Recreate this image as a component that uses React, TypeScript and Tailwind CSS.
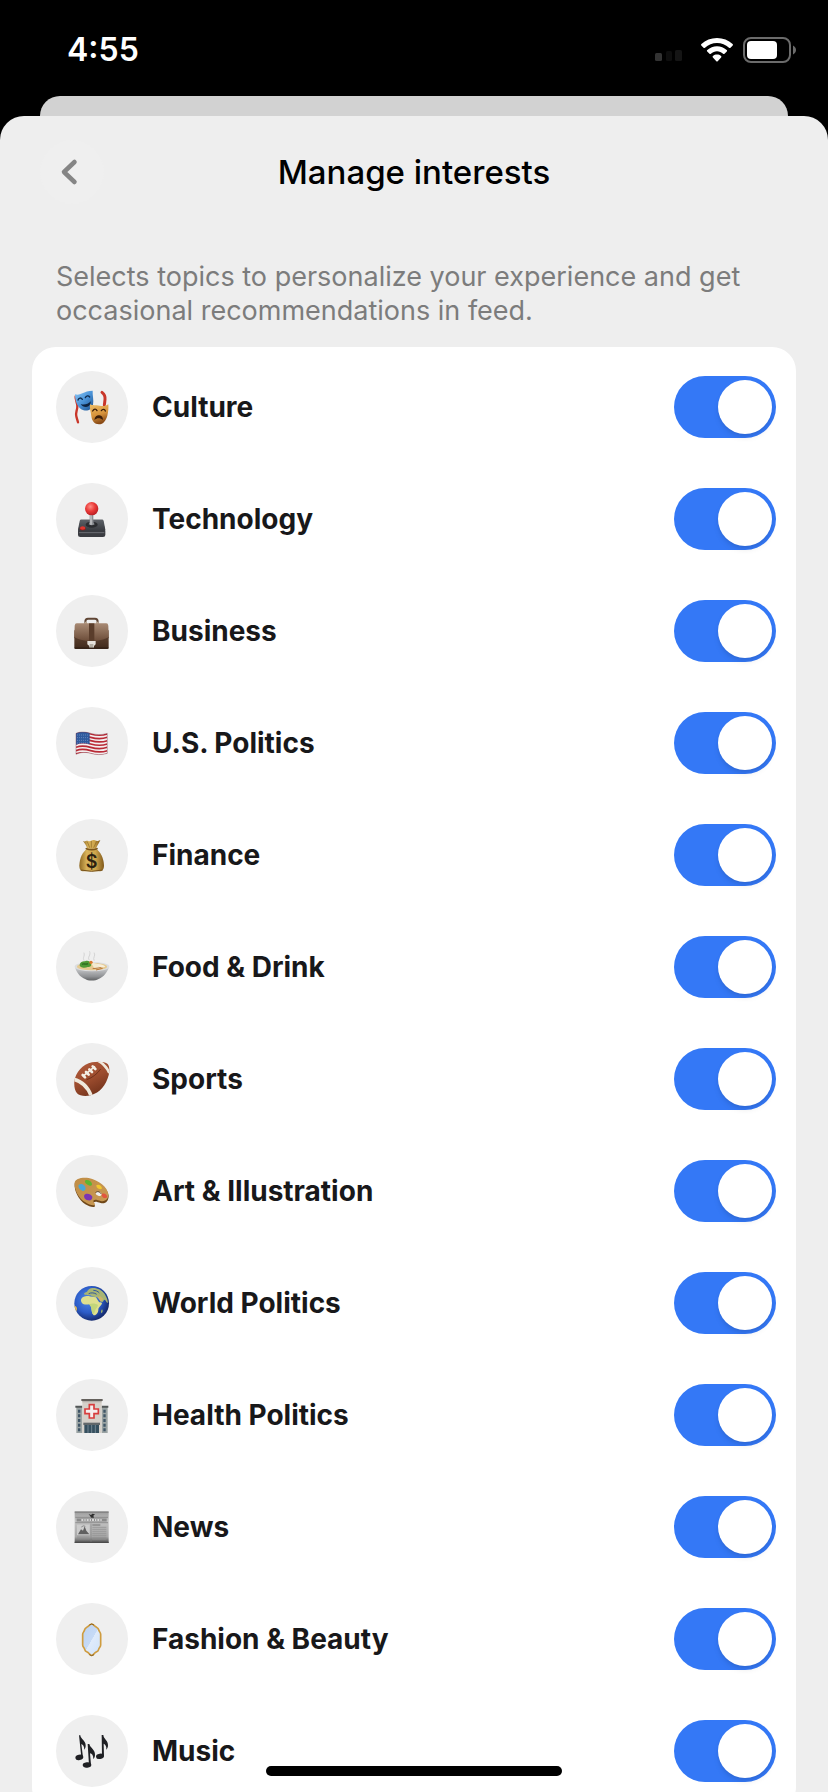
import { useState } from 'react';
import type { ReactNode } from 'react';

/* Topic drawings, all on a 108 x 108 grid */

function MasksIcon() {
  return (
    <>
      <defs>
        <linearGradient id="mask-blue" x1="0" y1="0" x2="1" y2="1">
          <stop offset="0" stopColor="#8cc8f5" />
          <stop offset="0.5" stopColor="#4a93d8" />
          <stop offset="1" stopColor="#1d4f8c" />
        </linearGradient>
        <linearGradient id="mask-gold" x1="0" y1="0" x2="0.3" y2="1">
          <stop offset="0" stopColor="#f0bf68" />
          <stop offset="0.6" stopColor="#d6923a" />
          <stop offset="1" stopColor="#8a4b17" />
        </linearGradient>
      </defs>
      <path d="M5 22c-2 10 6 20 5 32s-6 18-3 28c1 5 3 10 5 18" fill="none" stroke="#c9362a" strokeWidth="7" strokeLinecap="round" />
      <path d="M84 10c8 6 10 14 9 22s-1 12-2 16" fill="none" stroke="#c9362a" strokeWidth="9" strokeLinecap="round" />
      <path d="M3 16c8 3 14 1 22-3s18-8 31-8c-1 14 4 28 1 42-3 13-14 20-28 17C12 60 3 38 3 16z" fill="url(#mask-blue)" />
      <path d="M12 33c2-7 9-8 13-2M34 26c3-6 9-7 13-2" fill="none" stroke="#102b4d" strokeWidth="4" strokeLinecap="round" />
      <path d="M20 45c10 4 22 1 30-8 0 10-5 17-14 17-7 0-13-3-16-9z" fill="#0e2340" />
      <path d="M48 46c6 4 14 2 20 3 12 1 22 6 35-3 1 10 0 22-3 34-4 14-12 26-25 26-14 0-21-10-23-24-1-12-6-24-4-36z" fill="url(#mask-gold)" />
      <path d="M56 66c4-7 10-7 13-1M82 65c4-6 10-5 12 1" fill="none" stroke="#3b1d08" strokeWidth="4" strokeLinecap="round" />
      <path d="M61 93c2-12 9-15 15-14 8 1 11 7 11 14-8-6-17-7-26 0z" fill="#3b1d08" />
    </>
  );
}

function JoystickIcon() {
  return (
    <>
      <defs>
        <radialGradient id="joy-ball" cx="0.4" cy="0.35" r="0.7">
          <stop offset="0" stopColor="#ff8d85" />
          <stop offset="0.5" stopColor="#ea3a38" />
          <stop offset="1" stopColor="#b51c22" />
        </radialGradient>
        <linearGradient id="joy-base" x1="0" y1="0" x2="0" y2="1">
          <stop offset="0" stopColor="#5d6167" />
          <stop offset="1" stopColor="#36393e" />
        </linearGradient>
      </defs>
      <path d="M20 56h66l8 34v12q0 6-7 6H19q-7 0-7-6V90z" fill="#3a3c41" />
      <path d="M20 56h66q2 0 3 4l5 26q0 5-6 5H18q-6 0-6-5l5-26q1-4 3-4z" fill="url(#joy-base)" />
      <path d="M15 95h76" stroke="#6b6e73" strokeWidth="3" />
      <ellipse cx="53" cy="71" rx="18" ry="9" fill="#2a2c30" />
      <path d="M44 70q3-4 3-10V40h11v20q0 6 4 10-9 6-18 0z" fill="#8b8e93" />
      <path d="M49 40h4v31h-4z" fill="#c9cbce" />
      <circle cx="53" cy="23" r="20" fill="url(#joy-ball)" />
      <ellipse cx="26" cy="83" rx="9" ry="5" fill="#8e1a1a" />
      <ellipse cx="26" cy="81" rx="8" ry="5" fill="#e0372f" />
    </>
  );
}

function BriefcaseIcon() {
  return (
    <>
      <defs>
        <linearGradient id="case-flap" x1="0" y1="0" x2="0" y2="1">
          <stop offset="0" stopColor="#a88a74" />
          <stop offset="1" stopColor="#6b4c38" />
        </linearGradient>
        <linearGradient id="case-body" x1="0" y1="0" x2="0" y2="1">
          <stop offset="0" stopColor="#6c4d39" />
          <stop offset="1" stopColor="#3f291c" />
        </linearGradient>
      </defs>
      <path d="M34 32v-6q0-9 8-9h21q8 0 8 9v6" fill="none" stroke="#5f4534" strokeWidth="6" />
      <path d="M32 26h7v7h-7zM67 26h7v7h-7z" fill="#b9a690" />
      <rect x="1" y="50" width="103" height="58" rx="4" fill="url(#case-body)" />
      <path d="M8 31h89q5 0 6 7l1 36c-20 10-34 11-51 11S20 84 1 74l1-36q1-7 6-7z" fill="url(#case-flap)" />
      <path d="M1 74c19 10 35 11 52 11s31-1 51-11" fill="none" stroke="#4a3224" strokeWidth="2" />
      <path d="M45 31h16v53H45z" fill="#5a3d2b" />
      <path d="M40 84h25v10l-5 5v6H46v-6l-6-5z" fill="#e6e2dc" />
      <path d="M47 93h11v10H47z" fill="#b2aca2" />
      <path d="M2 105h101" stroke="#2d1c12" strokeWidth="3" />
    </>
  );
}

function FlagIcon() {
  const stripes = [0, 1, 2, 3, 4, 5, 6];
  return (
    <>
      <defs>
        <clipPath id="flag-shape">
          <path d="M6 25c14-6 30-4 44 0s32 6 50 0v60c-18 6-36 4-50 0s-30-4-44 3z" />
        </clipPath>
      </defs>
      <g clipPath="url(#flag-shape)">
        <path d="M0 10h108v90H0z" fill="#f4f0f0" />
        {stripes.map((i) => (
          <path
            key={i}
            d={`M6 ${27 + i * 10}c14-6 30-4 44 0s32 6 50 0`}
            fill="none"
            stroke="#b92a36"
            strokeWidth="5"
          />
        ))}
        <path d="M6 20h41v38c-14-4-28-4-41 1z" fill="#2f5a9e" />
        <path d="M10 30h36M10 38h36M10 46h36M10 54h34" stroke="#a9c0e2" strokeWidth="2" strokeDasharray="2 4" />
      </g>
      <path d="M6 25c14-6 30-4 44 0s32 6 50 0v60c-18 6-36 4-50 0s-30-4-44 3z" fill="none" stroke="#7d3a46" strokeOpacity="0.6" strokeWidth="2" />
    </>
  );
}

function MoneyBagIcon() {
  return (
    <>
      <defs>
        <linearGradient id="bag-gold" x1="0" y1="0" x2="1" y2="0">
          <stop offset="0" stopColor="#8f6a24" />
          <stop offset="0.3" stopColor="#d8b35a" />
          <stop offset="0.65" stopColor="#cfa64c" />
          <stop offset="1" stopColor="#80591a" />
        </linearGradient>
      </defs>
      <path d="M27 12c7 4 9-3 16 0s12-5 19-2 9 3 17-1c-4 9-9 16-13 26H40c-3-9-8-16-13-23z" fill="url(#bag-gold)" />
      <path d="M40 35h26c14 10 23 28 24 50 0 12-5 18-14 18H29c-9 0-13-6-13-18 1-22 9-40 24-50z" fill="url(#bag-gold)" />
      <path d="M40 14l7 18M52 12v20M68 13l-9 19" stroke="#8a6522" strokeWidth="2" />
      <path d="M37 35q16 6 32 0" fill="none" stroke="#7c5518" strokeWidth="5" strokeLinecap="round" />
      <path d="M20 99q33 8 66 0" fill="none" stroke="#76511a" strokeWidth="3" />
      <text x="53" y="92" textAnchor="middle" fontSize="54" fontWeight="600" fill="#2b2110">$</text>
    </>
  );
}

function BowlIcon() {
  return (
    <>
      <defs>
        <linearGradient id="bowl-side" x1="0" y1="0" x2="0" y2="1">
          <stop offset="0" stopColor="#d3d4d6" />
          <stop offset="0.7" stopColor="#8f9194" />
          <stop offset="1" stopColor="#5f6163" />
        </linearGradient>
      </defs>
      <path d="M30 34c-6-9 4-12 0-22M45 32c-6-8 7-13 2-24M60 34c-5-9 6-12 1-22" fill="none" stroke="#d4d4d4" strokeWidth="3" strokeLinecap="round" />
      <path d="M3 54c3 14 14 30 32 37 4 5 32 5 37 0 18-7 29-23 33-37z" fill="url(#bowl-side)" />
      <ellipse cx="54" cy="53" rx="52" ry="14" fill="#dcdddf" />
      <ellipse cx="54" cy="53" rx="45" ry="11" fill="#e5c98f" />
      <path d="M60 48c10-6 28-2 34 5-8 4-18 2-34-5z" fill="#f6eedb" />
      <path d="M50 40l10 16 18 4-10-16z" fill="#f3ead0" />
      <path d="M56 59l26-3M66 63l20-5" stroke="#b8763a" strokeWidth="3" />
      <path d="M17 47c2-9 10-11 16-10 8-4 18 1 18 8 3 6-4 10-10 9-9 4-25 2-24-7z" fill="#4e9a36" />
      <path d="M24 46c6-4 10 2 18-2" fill="none" stroke="#2c6a1f" strokeWidth="4" />
      <circle cx="51" cy="40" r="5" fill="#d9792c" />
    </>
  );
}

function FootballIcon() {
  return (
    <>
      <defs>
        <linearGradient id="ball-leather" x1="0.2" y1="0" x2="0.7" y2="1">
          <stop offset="0" stopColor="#b0593a" />
          <stop offset="0.5" stopColor="#9c4c2e" />
          <stop offset="1" stopColor="#6b2e18" />
        </linearGradient>
        <clipPath id="ball-shape">
          <path d="M1 62C4 34 26 10 54 4c18-4 40-2 47 5 6 8 7 20 3 34-8 30-26 52-54 60-16 4-33 2-41-6C2 89 0 76 1 62z" />
        </clipPath>
      </defs>
      <g clipPath="url(#ball-shape)">
        <path d="M0 0h108v108H0z" fill="url(#ball-leather)" />
        <path d="M-4 54c28 6 48 24 58 58" fill="none" stroke="#efe9dc" strokeWidth="11" />
        <path d="M70-2c16 8 28 20 36 38" fill="none" stroke="#efe9dc" strokeWidth="8" />
        <path d="M38 56C56 50 70 38 80 24" fill="none" stroke="#5b2412" strokeWidth="2" />
        <path d="M28 45L63 16" stroke="#f3eee4" strokeWidth="5" />
        <path d="M26 42l7 7M36 33l8 8M46 25l8 8M56 16l8 8" stroke="#f3eee4" strokeWidth="8" strokeLinecap="round" />
      </g>
    </>
  );
}

function PaletteIcon() {
  return (
    <>
      <defs>
        <linearGradient id="palette-wood" x1="0" y1="0" x2="1" y2="1">
          <stop offset="0" stopColor="#c08d45" />
          <stop offset="1" stopColor="#c99a55" />
        </linearGradient>
      </defs>
      <path d="M2 32C4 20 22 14 44 18c30 6 58 28 60 50 0 16-10 26-24 22-10-3-16-6-20-2-4 5 6 8 2 13-5 3-18-1-28-7C14 80 0 54 2 32z" fill="#6f4718" />
      <path d="M2 29C4 18 22 12 44 15c30 6 57 28 59 49 1 14-9 23-23 20-10-3-17-6-21-2-4 6 7 9 3 14-5 3-18-1-28-8C14 76 0 50 2 29z" fill="url(#palette-wood)" />
      <ellipse cx="74" cy="62" rx="9" ry="6" fill="#f0efee" transform="rotate(25 74 62)" />
      <path d="M65 59c3-5 12-4 16 3" fill="none" stroke="#4d310f" strokeWidth="3" />
      <path d="M34 22c8-3 18 3 20 10 1 7-7 8-12 4-6-3-12-9-8-14z" fill="#5cb531" />
      <path d="M14 36c7-7 17-2 20 6s-3 14-9 11c-6-2-14-10-11-17z" fill="#4aa7d6" />
      <path d="M67 37c7-5 16 2 17 9-4 6-18 1-17-9z" fill="#f0c72e" />
      <path d="M84 62c8-3 16 3 16 11-6 6-20 0-16-11z" fill="#e2563f" />
      <path d="M31 66c6-7 20-3 24 5 1 8-6 13-13 11-8-1-14-9-11-16z" fill="#7b34b5" />
    </>
  );
}

function GlobeIcon() {
  return (
    <>
      <defs>
        <radialGradient id="globe-sea" cx="0.4" cy="0.4" r="0.62">
          <stop offset="0" stopColor="#4f8bea" />
          <stop offset="0.6" stopColor="#2c5cc8" />
          <stop offset="1" stopColor="#142a6e" />
        </radialGradient>
        <clipPath id="globe-shape">
          <circle cx="53" cy="55" r="52" />
        </clipPath>
      </defs>
      <circle cx="53" cy="55" r="52" fill="url(#globe-sea)" />
      <g clipPath="url(#globe-shape)">
        <path d="M22 41c4-7 14-8 22-8 6 3 14 2 22 4 4 6 6 11 10 15 4 0 8 0 8 3-2 8-11 12-11 19 0 8-6 16-12 17-6-1-8-12-9-20 1-6-4-9-6-13-8 1-18 2-22-4-3-5-4-9-2-13z" fill="#dfe08f" />
        <path d="M46 58c8-4 20-2 26 2-1 9-8 11-9 18-1 5-4 9-7 9-3-6-3-14-4-19-1-4-5-6-6-10z" fill="#c3d67a" />
        <path d="M30 28c-1-5 5-6 9-8 3-6 9-11 17-11 12-1 28 6 36 18 6 10 9 18 10 26-4 2-6-8-11-9-3 2-4 8-7 8-5-2-8-12-14-15-8-2-16-1-20-6-6-1-13 1-20-3z" fill="#a8b574" />
        <path d="M44 26c8-4 17-3 24 2M58 16c7 0 14 3 18 8" fill="none" stroke="#345a9c" strokeWidth="3" />
        <path d="M70 36l10 14 8-8-9-8z" fill="#cdb569" />
        <path d="M0 62c6 0 9 5 9 10s-4 9-6 12z" fill="#e0b95a" />
        <path d="M84 73c3 2 2 9-1 12-3-2-2-9 1-12z" fill="#a9bd66" />
      </g>
    </>
  );
}

function HospitalIcon() {
  return (
    <>
      <path d="M7 30h18v78H7zM83 30h18v78H83z" fill="#9aa3a3" />
      <path d="M4 26h21v6H4zM83 26h20v6H83z" fill="#515656" />
      <path d="M25 10h58v98H25z" fill="#d5d0c9" />
      <path d="M22 6h64v6H22z" fill="#64605c" />
      <path d="M25 12h58v4H25z" fill="#b5b0aa" />
      <path d="M12 38h7v9h-7zM12 52h7v9h-7zM12 66h7v9h-7zM12 80h7v9h-7zM12 94h7v9h-7zM88 38h7v9h-7zM88 52h7v9h-7zM88 66h7v9h-7zM88 80h7v9h-7zM88 94h7v9h-7z" fill="#3f5567" />
      <path d="M46 23h14v13h13v14H60v13H46V50H33V36h13z" fill="#f5eeee" stroke="#d83c3c" strokeWidth="5" />
      <path d="M28 77h50v7H28z" fill="#62686b" />
      <path d="M31 84h44v24H31z" fill="#36505f" />
      <path d="M42 84v24M53 84v24M64 84v24" stroke="#8fa2ac" strokeWidth="2" />
    </>
  );
}

function NewspaperIcon() {
  return (
    <>
      <defs>
        <linearGradient id="paper-shade" x1="0" y1="0" x2="0" y2="1">
          <stop offset="0" stopColor="#9c9c9c" />
          <stop offset="0.3" stopColor="#c2c2c2" />
          <stop offset="0.8" stopColor="#a8a8a8" />
          <stop offset="1" stopColor="#4c4c4c" />
        </linearGradient>
      </defs>
      <path d="M2 8h102v94H2z" fill="url(#paper-shade)" />
      <path d="M2 9h102" stroke="#6d6d6d" strokeWidth="3" />
      <path d="M4 25h98M4 41h98" stroke="#777777" strokeWidth="2" />
      <path d="M8 33h90" stroke="#8a8a8a" strokeWidth="9" />
      <path d="M22 33h62" stroke="#d6d6d6" strokeWidth="6" strokeDasharray="6 3 4 3" />
      <path d="M44 15l7 3 4-4 8 2-5 4 2 6h-8z" fill="#2f2f2f" />
      <path d="M9 47h38v31H9z" fill="#cccccc" />
      <path d="M12 76l9-15 6 4 5-13 5 13 9 11z" fill="#606060" />
      <path d="M22 54q6-6 12-2" fill="none" stroke="#8a8a8a" strokeWidth="3" />
      <path d="M55 48h24" stroke="#707070" strokeWidth="3" />
      <path d="M55 55h42M55 61h42M55 67h42M55 73h42M55 79h42M9 84h38M9 90h38M55 85h42M55 91h42" stroke="#8c8c8c" strokeWidth="2" />
      <path d="M51 44v55" stroke="#808080" strokeWidth="2" />
      <path d="M2 100h102" stroke="#4a4a4a" strokeWidth="3" />
    </>
  );
}

function MirrorIcon() {
  return (
    <>
      <defs>
        <linearGradient id="mirror-glass" x1="0" y1="0" x2="1" y2="1">
          <stop offset="0" stopColor="#bcd3f2" />
          <stop offset="0.5" stopColor="#c6daf6" />
          <stop offset="0.51" stopColor="#dfebfb" />
          <stop offset="1" stopColor="#cfe2fa" />
        </linearGradient>
      </defs>
      <path
        d="M53 9c5 0 7 5 12 8 4 3 8 4 9 9 1 6 6 8 6 14v32c0 6-5 8-6 13-1 6-5 7-9 9-5 3-7 9-12 9s-7-6-12-9c-4-2-8-3-9-9-1-5-6-7-6-13V40c0-6 5-8 6-14 1-5 5-6 9-9 5-3 7-8 12-8z"
        fill="url(#mirror-glass)"
        stroke="#cf9c3f"
        strokeWidth="5"
      />
      <path d="M46 12q7-6 14 0M46 101q7 6 14 0" fill="none" stroke="#8a6220" strokeWidth="3" />
    </>
  );
}

function NotesIcon() {
  return (
    <g fill="#1f2024">
      <ellipse cx="16" cy="73" rx="12" ry="8" transform="rotate(-12 16 73)" />
      <path d="M15 7h4c1 12 17 16 16 31 0 5-2 9-4 12 0-10-4-15-9-17l5 40h-5z" />
      <ellipse cx="39" cy="96" rx="13" ry="8" transform="rotate(-8 39 96)" />
      <path d="M41 33h5c3 12 18 17 17 32 0 6-2 10-5 13 0-11-4-16-10-17l3 35h-6z" />
      <ellipse cx="78" cy="70" rx="12" ry="8" transform="rotate(-8 78 70)" />
      <path d="M83 6h5c1 12 15 17 14 31 0 6-2 10-5 13 1-11-3-16-8-18l1 38h-6z" />
    </g>
  );
}

type Topic = { name: string; icon: ReactNode };

const topics: Topic[] = [
  { name: 'Culture', icon: <MasksIcon /> },
  { name: 'Technology', icon: <JoystickIcon /> },
  { name: 'Business', icon: <BriefcaseIcon /> },
  { name: 'U.S. Politics', icon: <FlagIcon /> },
  { name: 'Finance', icon: <MoneyBagIcon /> },
  { name: 'Food & Drink', icon: <BowlIcon /> },
  { name: 'Sports', icon: <FootballIcon /> },
  { name: 'Art & Illustration', icon: <PaletteIcon /> },
  { name: 'World Politics', icon: <GlobeIcon /> },
  { name: 'Health Politics', icon: <HospitalIcon /> },
  { name: 'News', icon: <NewspaperIcon /> },
  { name: 'Fashion & Beauty', icon: <MirrorIcon /> },
  { name: 'Music', icon: <NotesIcon /> },
];

function StatusBar() {
  return (
    <div className="flex h-24 shrink-0 items-center justify-between pl-[67px] pr-8 pt-1">
      <span className="text-[32px] leading-10 font-semibold text-white">4:55</span>
      <div className="flex items-center">
        <svg className="mr-[18px] h-6 w-7" viewBox="0 0 28 24" aria-hidden="true">
          <rect x="0" y="15" width="7" height="8" rx="1.5" fill="#333" />
          <rect x="11" y="13" width="6" height="10" rx="1.5" fill="#0e0e0e" />
          <rect x="20" y="12" width="7" height="11" rx="1.5" fill="#151515" />
        </svg>
        <svg className="mr-2.5 h-6 w-8" viewBox="0 0 32 24" fill="#fff" aria-hidden="true">
          <path d="M16 0c6 0 11.5 2.2 15.6 6 .5.5.5 1 .1 1.500l-2.200 2.200c-.4.4-1 .4-1.500 0C24.700 6.700 20.600 5 16 5S7.300 6.700 4 9.700c-.5.4-1.100.4-1.500 0L.3 7.500c-.4-.5-.4-1 .1-1.500C4.500 2.200 10 0 16 0z" />
          <path d="M16 8.200c3.700 0 7 1.400 9.700 3.700.5.4.5 1 .1 1.500l-2.300 2.300c-.4.4-1 .4-1.400 0-1.700-1.500-3.800-2.400-6.100-2.400s-4.400.9-6.100 2.400c-.4.4-1 .4-1.400 0l-2.300-2.300c-.4-.5-.4-1.100.1-1.500C9 9.600 12.300 8.200 16 8.200z" />
          <path d="M16 16.600c1.500 0 2.900.5 4 1.400.5.4.5 1 .1 1.400l-3.400 3.800c-.4.4-1 .4-1.400 0l-3.400-3.800c-.4-.4-.4-1 .1-1.400 1.100-.9 2.500-1.400 4-1.400z" />
        </svg>
        <svg className="h-[26px] w-[53px]" viewBox="0 0 53 26" aria-hidden="true">
          <rect x="1" y="1" width="46" height="24" rx="7" fill="none" stroke="#6b6b6b" strokeWidth="2" />
          <rect x="4" y="4" width="30" height="18" rx="4" fill="#fff" />
          <path d="M50 8.500c4 2 4 7 0 9z" fill="#6b6b6b" />
        </svg>
      </div>
    </div>
  );
}

function TopicRow({ topic }: { topic: Topic }) {
  const [on, setOn] = useState(true);

  return (
    <li>
      <label className="flex h-28 cursor-pointer items-center">
        <span className="flex size-[72px] shrink-0 items-center justify-center rounded-full bg-[#efefef]">
          <svg className="size-9" viewBox="0 0 108 108" aria-hidden="true">
            {topic.icon}
          </svg>
        </span>
        <span className="ml-6 flex-1 text-[28px] leading-9 font-bold text-[#18181a]">{topic.name}</span>
        <input
          type="checkbox"
          checked={on}
          onChange={(e) => setOn(e.target.checked)}
          className="flex h-[62px] w-[102px] shrink-0 cursor-pointer appearance-none items-center rounded-full bg-[#dcdcdc] p-1 transition before:size-[54px] before:rounded-full before:bg-white before:shadow-md before:transition before:content-[''] checked:bg-[#3478f6] checked:before:translate-x-10"
        />
      </label>
    </li>
  );
}

export default function App() {
  return (
    <div className="relative flex h-screen flex-col overflow-hidden bg-black font-['Inter','Liberation_Sans',sans-serif]">
      <StatusBar />

      {/* Edge of the sheet underneath */}
      <div className="mx-10 h-5 shrink-0 rounded-t-[20px] bg-[#d2d2d2]" />

      <main className="flex min-h-0 flex-1 flex-col rounded-t-[24px] bg-[#eeeeee]">
        <header className="grid h-28 shrink-0 grid-cols-[64px_1fr_64px] items-center px-10">
          <button type="button" aria-label="Back" className="flex size-16 items-center justify-center rounded-full bg-[#efefef] pr-1.5">
            <svg className="h-7 w-5" viewBox="0 0 20 28" fill="none" stroke="#858585" strokeWidth="4.500" strokeLinecap="round" strokeLinejoin="round" aria-hidden="true">
              <path d="M15.500 4L5 14l10.500 10" />
            </svg>
          </button>
          <h1 className="text-center text-[33px] leading-10 font-medium text-black">Manage interests</h1>
        </header>

        <div className="min-h-0 flex-1 overflow-y-auto px-8 pt-8 [scrollbar-width:none]">
          <p className="px-6 text-[27px] leading-[34px] text-[#7c7c7c]">
            Selects topics to personalize your experience and get occasional recommendations in feed.
          </p>
          <ul className="mt-[19px] rounded-[24px] bg-white py-1 pl-6 pr-5">
            {topics.map((topic) => (
              <TopicRow key={topic.name} topic={topic} />
            ))}
          </ul>
        </div>
      </main>

      {/* Home indicator */}
      <div className="absolute bottom-4 left-1/2 h-2.5 w-[296px] -translate-x-1/2 rounded-full bg-black" />
    </div>
  );
}
